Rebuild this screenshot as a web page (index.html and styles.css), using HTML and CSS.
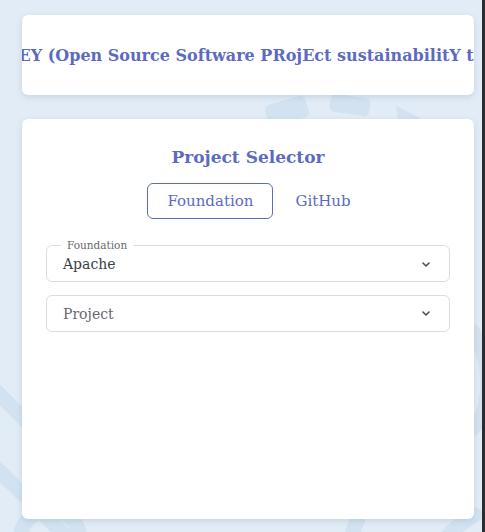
FILE: index.html
```html
<!DOCTYPE html>
<html lang="en">
<head>
<meta charset="utf-8">
<title>OSSPREY</title>
<link rel="stylesheet" href="styles.css">
</head>
<body>
<div class="backdrop" aria-hidden="true">
  <svg width="485" height="532" viewBox="0 0 485 532">
    <g fill="#d2e2f1">
      <rect x="266" y="100" width="42" height="22" rx="5" transform="rotate(-16 287 111)"/>
      <rect x="330" y="96" width="40" height="18" rx="5" transform="rotate(8 350 105)"/>
      <path d="M396 106 L420 118 L400 132 Z"/>
    </g>
    <g stroke="#d2e2f1" stroke-width="15" fill="none" stroke-linecap="round">
      <path d="M-10 385 L40 435"/>
      <path d="M-10 462 L80 550"/>
      <path d="M472 330 C492 360 492 410 472 430" stroke-width="14"/>
      <path d="M20 540 A30 30 0 0 1 80 540"/>
      <path d="M358 518 L348 545"/>
      <path d="M440 545 Q455 525 475 515"/>
    </g>
  </svg>
</div>
<main class="page">
  <section class="card header-card">
    <h1 class="app-title">OSSPREY (Open Source Software PRojEct sustainabilitY tracker)</h1>
  </section>
  <section class="card selector-card">
    <h2 class="selector-title">Project Selector</h2>
    <div class="tabs">
      <button class="tab tab-active">Foundation</button>
      <button class="tab">GitHub</button>
    </div>
    <fieldset class="select select-labeled">
      <legend class="select-label">Foundation</legend>
      <div class="select-row">
        <span class="select-value">Apache</span>
        <svg class="chevron" width="8" height="5" viewBox="0 0 8 5"><path d="M1 1 L4 4 L7 1" fill="none" stroke="#4a4f57" stroke-width="1.6" stroke-linecap="round" stroke-linejoin="round"/></svg>
      </div>
    </fieldset>
    <div class="select select-plain">
      <div class="select-row">
        <span class="select-placeholder">Project</span>
        <svg class="chevron" width="8" height="5" viewBox="0 0 8 5"><path d="M1 1 L4 4 L7 1" fill="none" stroke="#4a4f57" stroke-width="1.6" stroke-linecap="round" stroke-linejoin="round"/></svg>
      </div>
    </div>
  </section>
</main>
</body>
</html>
```

FILE: styles.css
```css
* { box-sizing: border-box; }

html, body { height: 100%; }

body {
  margin: 0;
  background: #e2ecf6;
  border-right: 3px solid #2c2c2c;
  font-family: "DejaVu Serif", "Liberation Serif", serif;
  overflow: hidden;
  position: relative;
}

.backdrop {
  position: absolute;
  left: 0;
  top: 0;
  z-index: 0;
}

.backdrop svg { display: block; }

.page {
  position: relative;
  z-index: 1;
  padding: 15px 0 0 22px;
  display: flex;
  flex-direction: column;
  gap: 24px;
  width: 474px;
}

.card {
  background: #ffffff;
  border-radius: 6px;
  box-shadow: 0 2px 6px rgba(60, 90, 130, 0.16);
}

.header-card {
  height: 80px;
  display: flex;
  align-items: center;
  justify-content: center;
  overflow: hidden;
}

.app-title {
  margin: 0;
  flex: none;
  white-space: nowrap;
  font-size: 16px;
  font-weight: 700;
  color: #5c6bc0;
}

.selector-card {
  height: 400px;
  padding: 24px 24px 0;
  display: flex;
  flex-direction: column;
}

.selector-title {
  margin: 0;
  text-align: center;
  font-size: 17px;
  line-height: 28px;
  font-weight: 700;
  color: #5c6bc0;
}

.tabs {
  margin-top: 12px;
  padding-left: 22px;
  display: flex;
  justify-content: center;
  gap: 2px;
}

.tab {
  height: 36px;
  padding: 0 19px;
  border: 1px solid transparent;
  border-radius: 6px;
  background: transparent;
  font-family: inherit;
  font-size: 15px;
  color: #5c6bc0;
}

.tab-active { border-color: #5c6bc0; }

.select {
  border: 1px solid #dcdcdc;
  border-radius: 6px;
  margin: 0;
}

.select-labeled {
  margin-top: 20px;
  padding: 0 16px 0 14px;
  min-width: 0;
}

.select-label {
  padding: 0 6px;
  font-size: 10.5px;
  line-height: 13px;
  color: #666a70;
}

.select-labeled .select-row {
  height: 29px;
  padding: 0 0 5px 2px;
}

.select-plain {
  margin-top: 13px;
  padding: 0 16px;
}

.select-plain .select-row { height: 35px; }

.select-row {
  display: flex;
  align-items: center;
  justify-content: space-between;
}

.select-value {
  font-size: 14px;
  color: #3a3f47;
}

.select-placeholder {
  font-size: 14px;
  color: #666a70;
}

.chevron { margin-right: 3px; }
```
